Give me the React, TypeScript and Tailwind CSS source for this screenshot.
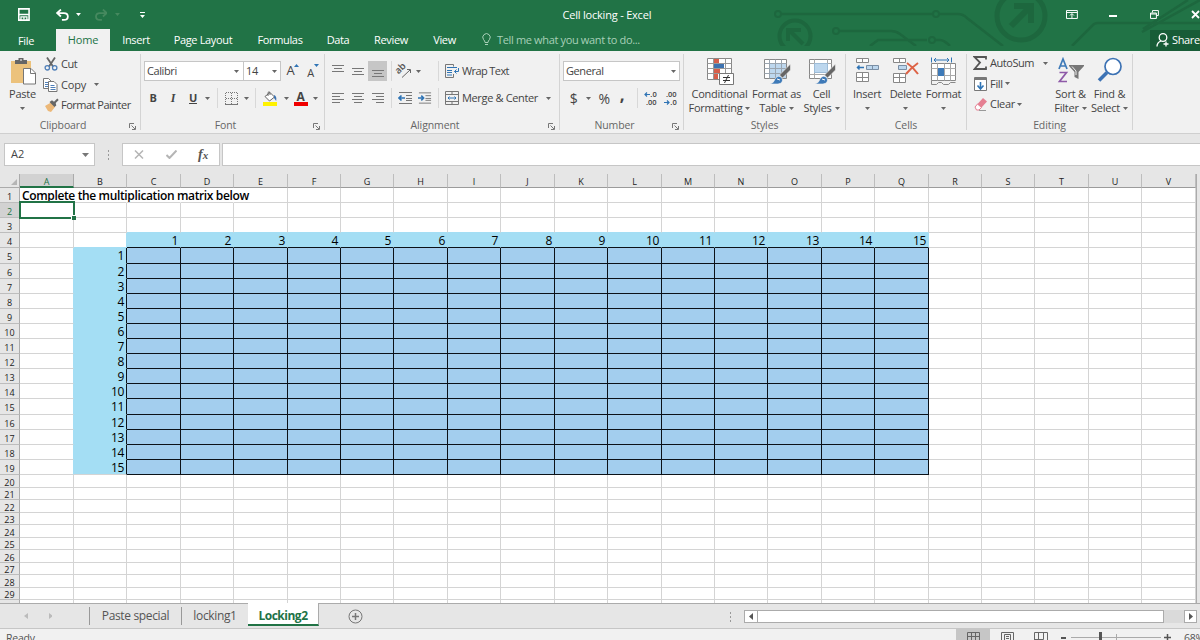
import type { ReactNode } from 'react';

const columns = 'ABCDEFGHIJKLMNOPQRSTUV'.split('');
const rows = Array.from({ length: 29 }, (_, i) => i + 1);

// whole-pixel track edges so every gridline lands on the pixel grid
const columnEdge = (i: number) => (i === 0 ? 20 : Math.floor(20 + 53.42 * i) + 1);
const rowEdge = (i: number) => (i <= 19 ? Math.round(15.105 * i) : Math.round(287 + 12.5 * (i - 19)));
const columnTracks = ['20px', ...columns.map((_, i) => `${columnEdge(i + 1) - columnEdge(i)}px`)].join(' ');

const Caret = ({ className = '' }: { className?: string }) => (
  <svg className={`w-[5px] h-[3px] shrink-0 ${className}`} viewBox="0 0 5 3" fill="#666">
    <path d="M0 0h5L2.500 3z" />
  </svg>
);

const Sep = ({ className = '' }: { className?: string }) => (
  <div className={`w-px h-5 bg-[#d8d8d8] shrink-0 ${className}`} />
);

const Slot = ({ className = 'w-5', children }: { className?: string; children?: ReactNode }) => (
  <div className={`h-5 shrink-0 flex items-center justify-center ${className}`}>{children}</div>
);

interface GroupProps {
  label: string;
  className: string;
  launcher?: boolean;
  children: ReactNode;
}

function Group({ label, className, launcher, children }: GroupProps) {
  return (
    <div className={`h-full shrink-0 flex ${className}`}>
      <div className="flex-1 min-w-0 flex flex-col">
        <div className="h-[68px] flex">{children}</div>
        <div className="h-[14px] flex items-center">
          <span className={`flex-1 text-center text-[10.5px] leading-[12px] pb-[2px] tracking-[-0.1px] text-[#666] ${launcher ? 'pr-[10px]' : ''}`}>{label}</span>
          {launcher && (
            <svg className="w-[7px] h-[7px] -ml-[7px] mr-1 mt-px" viewBox="0 0 7 7" fill="none" stroke="#777">
              <path d="M.5 5V.5H5M2.500 2.500l3.500 3.500M6.500 3v3.500H3" />
            </svg>
          )}
        </div>
      </div>
      <div className="w-px h-[76px] mt-[3px] bg-[#d4d4d4]" />
    </div>
  );
}

interface BigButtonProps {
  icon: ReactNode;
  lines: string[];
  className: string;
}

function BigButton({ icon, lines, className }: BigButtonProps) {
  return (
    <div className={`shrink-0 flex flex-col items-center pt-[6px] whitespace-nowrap tracking-[-0.25px] ${className}`}>
      <div className="h-[30px]">{icon}</div>
      <span className="leading-[14px]">{lines[0]}</span>
      <div className="h-[14px] flex items-center gap-[3px]">
        {lines[1] && <span className="leading-[14px]">{lines[1]}</span>}
        <Caret />
      </div>
    </div>
  );
}

const Lines = ({ d }: { d: string }) => (
  <svg width="14" height="12" viewBox="0 0 14 12" stroke="#777" fill="none">
    <path d={d} />
  </svg>
);

const PasteIcon = () => (
  <svg width="28" height="28" viewBox="0 0 28 28">
    <path d="M2 4h20v22H2z" fill="#ecc27c" />
    <path d="M6 3h3.500V1h5v2H18v4H6z" fill="#666" />
    <path d="M11 2.500h2v1h-2z" fill="#fff" />
    <path d="M14.500 11.500h7.500l4.500 4.500v11h-12z" fill="#fff" stroke="#777" />
    <path d="M21.500 11.500V16.500h5" fill="none" stroke="#777" />
  </svg>
);

const CutIcon = () => (
  <svg width="14" height="14" viewBox="0 0 14 14" fill="none">
    <path d="M3 .5l6 9M11 .5l-6 9" stroke="#666" strokeWidth="1.800" />
    <circle cx="3.300" cy="10.800" r="2.200" stroke="#4f7fb8" strokeWidth="1.300" />
    <circle cx="10.700" cy="10.800" r="2.200" stroke="#4f7fb8" strokeWidth="1.300" />
  </svg>
);

const CopyIcon = () => (
  <svg width="15" height="14" viewBox="0 0 15 14" fill="#fff" stroke="#777">
    <path d="M.5.5h5L8 3v7.500H.5z" />
    <path d="M2 4.500h3M2 6.500h3M2 8.500h3" stroke="#4f7fb8" />
    <path d="M5.500 3.500h5.500l3 3v7h-8.500z" />
    <path d="M7.500 7.500h4M7.500 9.500h5M7.500 11.500h5" stroke="#4f7fb8" />
  </svg>
);

const BrushIcon = () => (
  <svg width="15" height="14" viewBox="0 0 15 14">
    <path d="M1 8l6-3.500L11 9l-4 5-3-1z" fill="#ecb878" />
    <path d="M5.500 4L8 2.300l2 1.400L13.300.5l1.400 1.500-3 3 .6 2.500L10.500 9z" fill="#666" />
  </svg>
);

const BucketIcon = () => (
  <svg width="16" height="15" viewBox="0 0 16 15">
    <path d="M3 5.500L8 1.500l4.500 4.500-5 4z" fill="#fff" stroke="#666" />
    <path d="M6 5V1.500Q7 0 8 1.500V4" fill="none" stroke="#666" />
    <path d="M12 4q3 1 2.200 6L12 7z" fill="#3e73b0" />
    <path d="M1 11h14v4H1z" fill="#fff200" />
  </svg>
);

const IndentIcon = ({ right }: { right?: boolean }) => (
  <svg width="15" height="12" viewBox="0 0 15 12" fill="none" stroke="#777">
    <path d="M1 .5h13M8 3.500h6M8 6.500h6M8 8.500h6M1 11.500h13" />
    <path d={right ? 'M0 6h6M3.500 3.500L6 6 3.500 8.500' : 'M7 6H1M3.500 3.500L1 6l2.500 2.500'} stroke="#2f74b5" strokeWidth="1.700" />
  </svg>
);

const WrapIcon = () => (
  <svg width="15" height="14" viewBox="0 0 15 14" fill="none" stroke="#777">
    <path d="M8.500 2.500V.5h-8v13h8V10" />
    <path d="M2 3.500h10M2 6.500h5M2 8.500h5M2 11h5" stroke="#2f74b5" />
    <path d="M13.500 4v3.500H9.500M11.500 5.500l-2 2 2 2" stroke="#2f74b5" />
  </svg>
);

const MergeIcon = () => (
  <svg width="14" height="14" viewBox="0 0 14 14" fill="none" stroke="#777">
    <path d="M.5.5h13v13H.5zM.5 3.500h13M.5 10.500h13M7 .5v3M7 10.500v3" />
    <path d="M3 7h8M4.500 5.500L3 7l1.500 1.500M9.500 5.500L11 7l-1.500 1.500" stroke="#2f74b5" />
  </svg>
);

const OrientationIcon = () => (
  <svg className="overflow-visible" width="16" height="14" viewBox="0 0 16 14" fill="none" stroke="#666">
    <text x="2.500" y="10.500" fontSize="9.500" fontWeight="600" letterSpacing="-.3" fill="#555" stroke="none" transform="rotate(-45 2.500 10.500)">ab</text>
    <path d="M6 13.500L14 6M11 5.500h3.500v3.500" />
  </svg>
);

const ConditionalIcon = () => (
  <svg width="28" height="28" viewBox="0 0 28 28">
    <path d="M1.500 1.500h24v21h-24z" fill="#fff" stroke="#888" />
    <path d="M8 2h5v5H8zM8 12h6v5H8zM8 17h4v5H8z" fill="#d65f4b" />
    <path d="M8 7h10v5H8z" fill="#3e73b0" />
    <path d="M7.500 1.500v21M19.500 1.500v21M1.500 6.500h24M1.500 11.500h24M1.500 16.500h24" stroke="#999" fill="none" />
    <path d="M13.500 16.500h14v11h-14z" fill="#fff" stroke="#777" />
    <path d="M17 20.500h7M17 23.500h7M22.500 18l-4 8" stroke="#333" fill="none" />
  </svg>
);

const TableIcon = ({ plain }: { plain?: boolean }) => (
  <svg width="28" height="28" viewBox="0 0 28 28">
    <path d="M1.500 2.500h22v19h-22z" fill="#fff" stroke="#888" />
    {plain ? (
      <>
        <path d="M1.500 6.500h22M1.500 17.500h22M6.500 2.500v19M19.500 2.500v19" stroke="#aaa" fill="none" />
        <path d="M6.500 6.500h13v9h-13z" fill="#bdd7ee" stroke="#9dbcd8" />
      </>
    ) : (
      <>
        <path d="M7 7h16v14H7z" fill="#bdd7ee" />
        <path d="M1.500 6.500h22M1.500 11.500h22M1.500 16.500h22M6.500 2.500v19M12.500 2.500v19M18.500 2.500v19" stroke="#9aa5b0" fill="none" />
      </>
    )}
    <path d="M27.500 7v6l-8 8-3-3z" fill="#666" stroke="#f1f1f1" strokeWidth=".6" />
    <path d="M7 27q4-1 5-5 3-5 7-1 2 5-4 6z" fill="#3e7ab8" stroke="#f1f1f1" strokeWidth=".6" />
    <path d="M14 22l3 1" stroke="#fff" />
  </svg>
);

const InsertIcon = () => (
  <svg width="26" height="27" viewBox="0 0 26 27" fill="#fff" stroke="#888">
    <path d="M2.500 1.500h12v4h-12zM8.500 1.500v4M2.500 15.500h12v9h-12zM8.500 15.500v9M2.500 20.500h12" />
    <path d="M12.500 8.500h12v4h-12zM18.500 8.500v4" fill="#bdd7ee" stroke="#7a8fa5" />
    <path d="M3 10.500h7M5.500 8.500l-2 2 2 2" fill="none" stroke="#2f74b5" strokeWidth="1.500" />
  </svg>
);

const DeleteIcon = () => (
  <svg width="26" height="27" viewBox="0 0 26 27" fill="#fff" stroke="#888">
    <path d="M.5 1.500h12v4H.5zM6.500 1.500v4M.5 16.500h12v9H.5zM6.500 16.500v9M.5 20.500h12" />
    <path d="M5.500 8.500h8v4h-8z" fill="#bdd7ee" stroke="#7a8fa5" />
    <path d="M14 6q6 4 11 11M25 6q-7 5-12 11" fill="none" stroke="#dd6346" strokeWidth="2" />
  </svg>
);

const FormatIcon = () => (
  <svg width="27" height="29" viewBox="0 0 27 29" fill="none" stroke="#888">
    <path d="M1.500.5v5M21.500.5v5M4 3h15M6 1L4 3l2 2M17 1l2 2-2 2" stroke="#2f74b5" />
    <path d="M1.500 6.500h24v17h-24z" fill="#fff" />
    <path d="M1.500 11.500h24M1.500 18.500h24M7.500 6.500v17M14.500 6.500v17M20.500 6.500v17" stroke="#aaa" />
    <path d="M8 11h6v8H8z" fill="#3e7ab8" stroke="none" />
    <path d="M1.500 23.500v4h5l2-2h3l2 2h5l2-2h5" />
  </svg>
);

const SumIcon = () => (
  <svg width="14" height="14" viewBox="0 0 14 14" fill="none">
    <path d="M13 3.500V1H1.500l5.500 5.500L1.500 13H13v-2.500" stroke="#555" strokeWidth="1.800" />
  </svg>
);

const FillIcon = () => (
  <svg width="13" height="14" viewBox="0 0 13 14">
    <path d="M.5.5h12v13H.5z" fill="#fff" stroke="#777" />
    <path d="M1 1h11v2H1z" fill="#777" />
    <path d="M6.500 5v7M3.500 8.500l3 3.500 3-3.500" fill="none" stroke="#2f74b5" strokeWidth="1.600" />
  </svg>
);

const EraserIcon = () => (
  <svg width="13" height="13" viewBox="0 0 13 13">
    <path d="M1 9l2.500-3 4 3.500L5 12H2.500z" fill="#fff" stroke="#e57f92" />
    <path d="M3.500 6L9 0l4 3.500-5.500 6z" fill="#e57f92" />
    <path d="M5 12.500h7" stroke="#999" />
  </svg>
);

const SortIcon = () => (
  <svg width="28" height="28" viewBox="0 0 28 28">
    <path d="M2 12L6 2l4 10M3.500 9h5" fill="none" stroke="#3e7ab8" strokeWidth="1.700" />
    <path d="M2.500 15.500h7L2.500 24.500h7.500" fill="none" stroke="#8e5aa8" strokeWidth="1.700" />
    <path d="M12 8h15v1l-5.500 6v7l-4-2v-5L12 9z" fill="#777" />
    <path d="M15 9.500l4 4.500v4" fill="none" stroke="#eee" />
  </svg>
);

const FindIcon = () => (
  <svg width="28" height="28" viewBox="0 0 28 28" fill="none" stroke="#3c72b4">
    <circle cx="17" cy="9.500" r="8" fill="#fff" strokeWidth="1.700" />
    <path d="M11 15.500L3 23.500" strokeWidth="3.500" />
  </svg>
);

function TitleBar() {
  return (
    <div className="relative h-[51px] bg-[#217346] text-white">
      <svg className="absolute right-0 top-0" width="430" height="46" viewBox="0 0 430 46" fill="none" stroke="#1d673e" strokeWidth="2.500">
        <circle cx="8" cy="14" r="3" strokeWidth="2" />
        <path d="M12 14h150M170 14h18q5 0 9 4l36 28M70 31h51q5 0 9 3l16 12M100 46l8-6h49M166 40h4q4 0 10 6M302 46l20-20q2-3 6-3h102M430 0l-58 32M418 0l-45 29" />
        <circle cx="166" cy="14" r="3" strokeWidth="2" />
        <circle cx="66" cy="31" r="3" strokeWidth="2" />
        <circle cx="162" cy="40" r="3" strokeWidth="2" />
        <circle cx="25" cy="36" r="15.500" strokeWidth="4" />
        <path d="M33 44L20 31M18 41V30h13" strokeWidth="4" />
        <circle cx="251" cy="16" r="24" strokeWidth="5" />
        <path d="M241 26l19-19M244 6h17v17" strokeWidth="6" />
      </svg>
      <div className="relative h-[29px] flex items-center">
        <svg className="ml-[18px]" width="12" height="13" viewBox="0 0 12 13">
          <path d="M.8.8h10.400v11.400H.8z" fill="none" stroke="#fff" strokeWidth="1.600" />
          <path d="M1 6.500h10M3 12V9h6v3M6 9.500v2" fill="none" stroke="#fff" strokeWidth="1.300" />
        </svg>
        <svg className="ml-[26px]" width="13" height="12" viewBox="0 0 13 12" fill="none" stroke="#fff" strokeWidth="1.800">
          <path d="M5 .5L1 4l4 3.500M1 4h7q4 0 4 3.500T8 11H6" />
        </svg>
        <svg className="ml-[7px]" width="5" height="3" viewBox="0 0 5 3"><path d="M0 0h5L2.500 3z" fill="#fff" /></svg>
        <svg className="ml-[14px]" width="13" height="12" viewBox="0 0 13 12" fill="none" stroke="#46895f" strokeWidth="1.800">
          <path d="M8 .5L12 4 8 7.500M12 4H5Q1 4 1 7.500T5 11h2" />
        </svg>
        <svg className="ml-2" width="5" height="3" viewBox="0 0 5 3"><path d="M0 0h5L2.500 3z" fill="#46895f" /></svg>
        <svg className="ml-5" width="5" height="6" viewBox="0 0 5 6"><path d="M0 0h5v1H0zM0 3h5L2.500 6z" fill="#fff" /></svg>
        <span className="ml-[417px] w-[90px] mt-[2px] text-center whitespace-nowrap text-[11px] tracking-[-0.2px]">Cell locking - Excel</span>
        <svg className="ml-[415px]" width="12" height="9" viewBox="0 0 12 9" fill="none" stroke="#fff">
          <path d="M.5.5h11v8H.5zM.5 2.500h11M6 8V4M4 5.500l2-2 2 2" />
        </svg>
        <div className="ml-[31px] mt-[2px] w-2 h-[2px] bg-white" />
        <svg className="ml-[33px]" width="9" height="9" viewBox="0 0 9 9" fill="none" stroke="#fff">
          <path d="M2.500 2.500V.5h6v5h-2M.5 3h6v5.500h-6zM.5 4h6" />
        </svg>
        <svg className="ml-8 shrink-0" width="9" height="9" viewBox="0 0 9 9" stroke="#fff" strokeWidth="1.800">
          <path d="M1 1l7 7M8 1L1 8" />
        </svg>
      </div>
      <div className="relative h-[22px] flex text-[11px] leading-[22px] text-center whitespace-nowrap tracking-[-0.35px]">
        <div className="w-[52px] pt-px">File</div>
        <div className="ml-1 w-[54px] bg-[#f1f1f1] text-[#217346] tracking-[-0.2px]">Home</div>
        <div className="w-[52px]">Insert</div>
        <div className="w-[82px]">Page Layout</div>
        <div className="w-[72px]">Formulas</div>
        <div className="w-11">Data</div>
        <div className="w-[62px]">Review</div>
        <div className="w-[45px]">View</div>
        <svg className="ml-[15px] mt-[4px]" width="9" height="13" viewBox="0 0 9 13" fill="none" stroke="#a8d0b8">
          <path d="M3 9.500Q3 8 1.500 6.500A3.700 3.700 0 1 1 7.500 6.500Q6 8 6 9.500zM3 11.500h3" />
        </svg>
        <span className="ml-[6px] text-[#a8d0b8]">Tell me what you want to do...</span>
        <div className="ml-auto w-[50px] mt-px h-[21px] leading-[20px] bg-[#185c37] flex">
          <svg className="ml-[6px] mt-[3px] shrink-0" width="14" height="14" viewBox="0 0 14 14" fill="none" stroke="#fff" strokeWidth="1.300">
            <circle cx="7" cy="4.500" r="3.800" />
            <path d="M1 13.500Q1 9.500 5 8M10 8.500v5M7.500 11h5" />
          </svg>
          <span className="ml-[2px]">Share</span>
        </div>
      </div>
    </div>
  );
}

function Ribbon() {
  return (
    <div className="h-[82px] flex bg-[#f1f1f1] text-[11px] text-[#444] tracking-[-0.4px]">
      <Group label="Clipboard" className="w-[141px]" launcher>
        <BigButton className="w-[42px] pl-[3px]" icon={<PasteIcon />} lines={['Paste']} />
        <div className="pt-[3px] flex flex-col whitespace-nowrap">
          <div className="h-[20.5px] flex items-center"><span className="w-[19px] pl-[2px]"><CutIcon /></span>Cut</div>
          <div className="h-[20.5px] flex items-center"><span className="w-[19px] pl-px"><CopyIcon /></span><span className="w-[33px] tracking-[-0.2px]">Copy</span><Caret /></div>
          <div className="h-[20.5px] flex items-center tracking-[-0.5px]"><span className="w-[19px] pl-[2px]"><BrushIcon /></span>Format Painter</div>
        </div>
      </Group>

      <Group label="Font" className="w-[184px]" launcher>
        <div className="pl-[3px] pt-[10px] flex flex-col">
          <div className="flex h-5">
            <div className="w-[100px] h-5 border border-[#c6c6c6] bg-white flex items-center justify-between pl-[2px] pr-1">Calibri<Caret /></div>
            <div className="w-[38px] -ml-px h-5 border border-[#c6c6c6] bg-white flex items-center justify-between pl-[2px] pr-[3px]">14<Caret /></div>
            <Slot className="w-6"><span className="text-[13px]">A</span><Caret className="rotate-180 -mt-3 fill-[#2f74b5]" /></Slot>
            <Slot className="w-[16px]"><span className="text-[11px] mt-1">A</span><Caret className="-mt-3 fill-[#2f74b5]" /></Slot>
          </div>
          <div className="flex h-5 mt-[7px] -ml-px items-center">
            <Slot><b>B</b></Slot>
            <Slot><i className="font-['Liberation_Serif',serif] font-bold text-[12px]">I</i></Slot>
            <Slot><b className="underline">U</b></Slot>
            <Slot className="w-2"><Caret /></Slot>
            <Sep className="ml-[6px]" />
            <Slot className="w-[26px]">
              <svg width="13" height="13" viewBox="0 0 13 13" fill="none" stroke="#777">
                <path d="M.5 12V.5h12V12M6.500 1v11M1 6.500h11" strokeDasharray="1 1" />
                <path d="M0 12.500h13" />
              </svg>
            </Slot>
            <Slot className="w-[5px]"><Caret /></Slot>
            <Sep className="ml-[6px]" />
            <Slot className="w-[28px]"><BucketIcon /></Slot>
            <Slot className="w-[4px]"><Caret /></Slot>
            <Slot className="w-[25px]">
              <div className="w-[14px] flex flex-col items-center border-b-4 border-[#f00000]">
                <b className="leading-[11px] text-[12px]">A</b>
              </div>
            </Slot>
            <Slot className="w-[5px]"><Caret /></Slot>
          </div>
        </div>
      </Group>

      <Group label="Alignment" className="w-[235px]" launcher>
        <div className="pl-[3px] pt-[10px] flex flex-col whitespace-nowrap">
          <div className="flex h-5 items-center">
            <Slot><Lines d="M1 .5h12M3 3.500h8M1 6.500h12" /></Slot>
            <Slot><Lines d="M1 3.500h12M3 6.500h8M1 9.500h12" /></Slot>
            <Slot className="w-[19px] bg-[#c6c6c6]"><Lines d="M1 5.500h12M3 8.500h8M1 11.500h12" /></Slot>
            <Sep className="ml-1" />
            <Slot className="w-[24px]"><OrientationIcon /></Slot>
            <Caret />
            <Sep className="ml-[17px]" />
            <Slot className="w-[23px] pl-[3px]"><WrapIcon /></Slot>
            <span className="tracking-[-0.6px]">Wrap Text</span>
          </div>
          <div className="flex h-5 mt-[7px] items-center">
            <Slot><Lines d="M1 1.500h12M1 4.500h8M1 7.500h12M1 10.500h8" /></Slot>
            <Slot><Lines d="M1 1.500h12M3 4.500h8M1 7.500h12M3 10.500h8" /></Slot>
            <Slot className="w-[19px]"><Lines d="M1 1.500h12M5 4.500h8M1 7.500h12M5 10.500h8" /></Slot>
            <Sep className="ml-1" />
            <Slot className="w-[26px]"><IndentIcon /></Slot>
            <Slot className="w-[14px]"><IndentIcon right /></Slot>
            <Sep className="ml-[6px]" />
            <Slot className="w-[23px] pl-[3px]"><MergeIcon /></Slot>
            <span className="w-[84px] tracking-[-0.35px]">Merge &amp; Center</span>
            <Caret />
          </div>
        </div>
      </Group>

      <Group label="Number" className="w-[124px]" launcher>
        <div className="pl-[3px] pt-[10px] flex flex-col">
          <div className="w-[117px] h-5 border border-[#c6c6c6] bg-white flex items-center justify-between pl-[2px] pr-[3px]">General<Caret /></div>
          <div className="flex h-5 mt-[7px] items-center">
            <Slot className="w-[21px]"><span className="text-[14px]">$</span></Slot>
            <Slot className="w-2"><Caret /></Slot>
            <Slot className="w-6"><span className="text-[14px]">%</span></Slot>
            <Slot className="w-3 pb-2"><b className="text-[17px] leading-none">,</b></Slot>
            <Sep className="ml-[9px]" />
            <Slot className="w-[25px]">
              <div className="flex flex-col items-end text-[7.5px] font-semibold tracking-normal">
                <div className="h-2 flex items-center">
                  <svg width="6" height="5" viewBox="0 0 6 5" fill="none" stroke="#2f74b5" strokeWidth="1.200"><path d="M6 2.500H1M3 .5l-2 2 2 2" /></svg>
                  <span className="leading-[8px]">.0</span>
                </div>
                <span className="leading-[8px]">.00</span>
              </div>
            </Slot>
            <Slot className="w-[15px]">
              <div className="flex flex-col items-end text-[7.5px] font-semibold tracking-normal">
                <span className="leading-[8px]">.00</span>
                <div className="h-2 flex items-center">
                  <svg width="6" height="5" viewBox="0 0 6 5" fill="none" stroke="#2f74b5" strokeWidth="1.200"><path d="M0 2.500h5M3 .5l2 2-2 2" /></svg>
                  <span className="leading-[8px]">.0</span>
                </div>
              </div>
            </Slot>
          </div>
        </div>
      </Group>

      <Group label="Styles" className="w-[162px]">
        <BigButton className="w-[71px]" icon={<ConditionalIcon />} lines={['Conditional', 'Formatting']} />
        <BigButton className="w-[43px]" icon={<TableIcon />} lines={['Format as', 'Table']} />
        <BigButton className="w-[47px]" icon={<TableIcon plain />} lines={['Cell', 'Styles']} />
      </Group>

      <Group label="Cells" className="w-[121px]">
        <BigButton className="w-[40px] ml-[1px]" icon={<InsertIcon />} lines={['Insert']} />
        <BigButton className="w-[37px]" icon={<DeleteIcon />} lines={['Delete']} />
        <BigButton className="w-[39px]" icon={<FormatIcon />} lines={['Format']} />
      </Group>

      <Group label="Editing" className="w-[166px]">
        <div className="w-[84px] pl-[6px] pt-[2px] flex flex-col tracking-[-0.3px]">
          <div className="h-[20.5px] flex items-center"><span className="w-[17px]"><SumIcon /></span><span className="w-[53px] tracking-[-0.45px]">AutoSum</span><Caret /></div>
          <div className="h-[20.5px] flex items-center"><span className="w-[17px] pl-px"><FillIcon /></span>Fill<Caret className="ml-[2px]" /></div>
          <div className="h-[20.5px] flex items-center"><span className="w-[17px] pl-px"><EraserIcon /></span>Clear<Caret className="ml-[2px]" /></div>
        </div>
        <BigButton className="w-[39px]" icon={<SortIcon />} lines={['Sort &', 'Filter']} />
        <BigButton className="w-[39px]" icon={<FindIcon />} lines={['Find &', 'Select']} />
      </Group>
    </div>
  );
}

function FormulaBar() {
  return (
    <div className="h-[41px] pt-[9px] border-t border-[#cfcfcf] bg-[#e6e6e6] flex text-[#444]">
      <div className="ml-1 w-[91px] h-[23px] bg-white border border-[#c6c6c6] flex items-center justify-between pl-[6px] pr-[5px] text-[11px]">
        A2
        <svg width="7" height="4" viewBox="0 0 7 4"><path d="M0 0h7L3.500 4z" fill="#777" /></svg>
      </div>
      <div className="w-[27px] h-[23px] flex flex-col items-center justify-center gap-[2px]">
        <i className="w-px h-[2px] bg-[#999]" />
        <i className="w-px h-[2px] bg-[#999]" />
        <i className="w-px h-[2px] bg-[#999]" />
      </div>
      <div className="w-[98px] h-[23px] bg-white border border-[#c6c6c6] flex items-center">
        <svg className="ml-[11px]" width="10" height="9" viewBox="0 0 10 9" stroke="#b5b5b5" strokeWidth="1.500"><path d="M1 .5l8 8M9 .5l-8 8" /></svg>
        <svg className="ml-[22px]" width="11" height="9" viewBox="0 0 11 9" fill="none" stroke="#b5b5b5" strokeWidth="2"><path d="M.5 5l3 3 7-7.500" /></svg>
        <span className="ml-[21px] font-['Liberation_Serif',serif] italic font-bold text-[14px] leading-none text-[#555]">f<span className="text-[11px]">x</span></span>
      </div>
      <div className="ml-[2px] flex-1 h-[23px] bg-white border border-r-0 border-[#c6c6c6]" />
    </div>
  );
}

// matrix headers run along row 4 and down column B, the answer area is C5:Q19
function cellClass(row: number, col: number) {
  const inMatrix = row >= 5 && row <= 19 && col >= 2 && col <= 16;
  if (inMatrix) return 'bg-[#a3ceee] border-[#0c1218]';
  if (row === 4 && col >= 2 && col <= 16) return 'bg-[#a4def4] border-r-[#a4def4] border-b-[#0c1218]';
  if (row === 19 && col === 1) return 'bg-[#a4def4] border-b-[#d4d4d4] border-r-[#0c1218]';
  if (row >= 5 && row <= 19 && col === 1) return 'bg-[#a4def4] border-b-[#a4def4] border-r-[#0c1218]';
  if (row >= 5 && row <= 19 && col === 0) return 'border-r-[#a4def4] border-b-[#d4d4d4]';
  if (row === 4 && col === 1) return 'border-r-[#a4def4] border-b-[#a4def4]';
  if (row === 3 && col >= 2 && col <= 16) return 'border-r-[#d4d4d4] border-b-[#a4def4]';
  if (row === 1 && col < 4) return 'border-r-transparent border-b-[#d4d4d4]';
  return 'border-[#d4d4d4]';
}

function cellValue(row: number, col: number) {
  if (row === 4 && col >= 2 && col <= 16) return col - 1;
  if (col === 1 && row >= 5 && row <= 19) return row - 4;
  return null;
}

function Sheet() {
  return (
    <div className="h-[429px] bg-[#e6e6e6] flex overflow-hidden">
      <div className="w-[1197px] border-r border-[#ababab] flex flex-col overflow-hidden">
        <div
          className="h-[14px] shrink-0 grid text-[9px] leading-[15px] text-center text-[#222]"
          style={{ gridTemplateColumns: columnTracks }}
        >
          <div className="border-r border-b border-[#ababab] flex items-end justify-end pr-[2px] pb-[2px]">
            <svg width="6" height="6" viewBox="0 0 6 6"><path d="M6 0v6H0z" fill="#b5b5b5" /></svg>
          </div>
          {columns.map((name, i) => (
            <div
              key={name}
              className={`h-[14px] ${i === 0 ? 'bg-[#d2d2d2] text-[#217346] border-r border-r-[#ababab] border-b-2 border-b-[#217346]' : 'border-r border-r-[#bdbdbd] border-b border-b-[#9b9b9b]'}`}
            >
              {name}
            </div>
          ))}
        </div>
        <div className="relative flex-1 bg-white">
          {rows.map((row) => (
            <div
              key={row}
              className="grid"
              style={{ gridTemplateColumns: columnTracks, height: rowEdge(row) - rowEdge(row - 1), gridTemplateRows: '100%' }}
            >
              <div className={`border-r border-r-[#ababab] border-b border-b-[#bdbdbd] flex items-center justify-center text-[9px] leading-none pt-[2px] font-medium ${row === 2 ? 'bg-[#d2d2d2] text-[#217346]' : 'bg-[#e6e6e6] text-[#222]'}`}>
                {row}
              </div>
              {columns.map((name, col) => (
                <div
                  key={name}
                  className={`border-r border-b min-w-0 text-right pr-[2px] text-[12px] leading-[16px] tracking-[-0.4px] text-black ${cellClass(row, col)}`}
                >
                  {row === 1 && col === 0 ? (
                    <div className="w-max pl-[2px] whitespace-nowrap text-left font-semibold tracking-[-0.36px]">Complete the multiplication matrix below</div>
                  ) : (
                    cellValue(row, col)
                  )}
                </div>
              ))}
            </div>
          ))}
          <div className="grid h-[4px]" style={{ gridTemplateColumns: columnTracks }}>
            <div className="bg-[#e6e6e6] border-r border-[#ababab]" />
            {columns.map((name) => <div key={name} className="border-r border-[#d4d4d4]" />)}
          </div>
          {/* active cell */}
          <div className="absolute left-[19px] top-[13px] w-[56px] h-[18px] border-2 border-[#217346]">
            <div className="absolute -right-[3px] -bottom-[3px] w-[5px] h-[5px] bg-[#217346] border-t border-l border-white" />
          </div>
        </div>
      </div>
    </div>
  );
}

function SheetTabs() {
  return (
    <div className="h-[25px] bg-[#e6e6e6] border-t border-[#ababab] flex text-[12px] tracking-[-0.35px] text-[#555] whitespace-nowrap">
      <svg className="ml-6 mt-[9px]" width="28" height="6" viewBox="0 0 28 6" fill="#bbb">
        <path d="M4 0v6L0 3zM25 0v6l4-3z" />
      </svg>
      <div className="ml-[37px] mt-[3px] w-[92px] h-[18px] border-l border-[#999] text-center leading-[18px]">Paste special</div>
      <div className="mt-[3px] w-[67px] h-[18px] border-l border-[#999] text-center leading-[18px]">locking1</div>
      <div className="-mt-px w-[71px] h-[23px] bg-white border-r border-r-[#ababab] border-b-2 border-b-[#217346] text-center leading-[25px] font-bold text-[#217346] tracking-[-0.5px]">Locking2</div>
      <svg className="ml-[29px] mt-[5px]" width="15" height="15" viewBox="0 0 15 15" fill="none" stroke="#777">
        <circle cx="7.500" cy="7.500" r="6.500" />
        <path d="M7.500 4v7M4 7.500h7" strokeWidth="1.500" />
      </svg>
      <div className="ml-[367px] mt-2 flex flex-col gap-[2px]">
        <i className="w-px h-[2px] bg-[#999]" />
        <i className="w-px h-[2px] bg-[#999]" />
        <i className="w-px h-[2px] bg-[#999]" />
      </div>
      <div className="ml-[13px] mt-[6px] w-[453px] h-[13px] flex bg-[#dadada]">
        <div className="w-[14px] border border-[#ababab] bg-white flex items-center justify-center">
          <svg width="4" height="7" viewBox="0 0 4 7"><path d="M4 0v7L0 3.500z" fill="#555" /></svg>
        </div>
        <div className="w-[407px] -ml-px border border-[#ababab] bg-white" />
        <div className="ml-auto w-[13px] border border-[#ababab] bg-white flex items-center justify-center">
          <svg width="4" height="7" viewBox="0 0 4 7"><path d="M0 0v7l4-3.500z" fill="#555" /></svg>
        </div>
      </div>
    </div>
  );
}

function StatusBar() {
  return (
    <div className="h-[12px] bg-[#f1f1f1] border-t border-[#c6c6c6] flex items-start overflow-hidden text-[10.5px] text-[#555]">
      <span className="ml-[6px] w-[950px] shrink-0 leading-[18px] tracking-[-0.2px]">Ready</span>
      <div className="w-[34px] h-[12px] shrink-0 bg-[#c6c6c6] flex justify-center pt-[3px]">
        <svg width="13" height="12" viewBox="0 0 13 12" fill="none" stroke="#666"><path d="M.5.5h12v11H.5zM.5 4.500h12M.5 8.500h12M4.500.5v11M8.500.5v11" /></svg>
      </div>
      <svg className="ml-[11px] mt-[3px] shrink-0" width="13" height="12" viewBox="0 0 13 12" fill="none" stroke="#666"><path d="M.5.5h12v13H.5zM3.500 2.500h6v10h-6zM5 4.500h3M5 6.500h3M5 8.500h3" /></svg>
      <svg className="ml-[20px] mt-[3px] shrink-0" width="14" height="12" viewBox="0 0 14 12" fill="none" stroke="#666"><path d="M.5.5h13v13H.5zM4.500.5v7M9.500.5v7h-9" /></svg>
      <div className="ml-[13px] mt-[8px] w-[5px] h-[2px] shrink-0 bg-[#555]" />
      <svg className="ml-[5px] mt-[3px] shrink-0" width="90" height="9" viewBox="0 0 90 9">
        <path d="M0 5.500h90M45.500 2v7" stroke="#aaa" />
        <path d="M28 0h3v9h-3z" fill="#555" />
      </svg>
      <svg className="ml-[3px] mt-[5px] shrink-0" width="7" height="8" viewBox="0 0 7 8"><path d="M0 3.500h7M3.500 0v7" stroke="#555" strokeWidth="1.500" /></svg>
      <span className="ml-[13px] leading-[18px] tracking-[-0.2px]">68%</span>
    </div>
  );
}

export default function App() {
  return (
    <div className="w-[1200px] h-[640px] overflow-hidden flex flex-col bg-[#e6e6e6] font-['Open_Sans','Noto_Sans',sans-serif]">
      <TitleBar />
      <Ribbon />
      <FormulaBar />
      <Sheet />
      <SheetTabs />
      <StatusBar />
    </div>
  );
}
